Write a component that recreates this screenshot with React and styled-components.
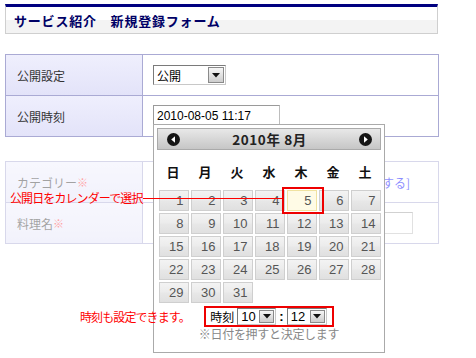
import styled, { createGlobalStyle } from "styled-components";

const GlobalStyle = createGlobalStyle`
  body {
    margin: 0;
    background: #fff;
    font-family: "Noto Sans CJK JP", "Liberation Sans", sans-serif;
  }
`;

const Page = styled.div`
  position: relative;
  width: 476px;
  height: 358px;
  overflow: hidden;
  padding: 4px 0 0 5px;
  box-sizing: border-box;
`;

const Header = styled.div`
  width: 433px;
  height: 26px;
  box-sizing: content-box;
  border-top: 3px solid #000080;
  border-left: 1px solid #cfcfcf;
  border-right: 1px solid #cfcfcf;
  border-bottom: 1px solid #cfcfcf;
  background: linear-gradient(#ffffff 0%, #ffffff 50%, #f3f3f3 50%, #f3f3f3 100%);
  display: flex;
  align-items: center;
  padding-left: 8px;
  box-sizing: border-box;
  height: 30px;
`;

const Title = styled.h1`
  margin: 0;
  font-size: 13px;
  font-weight: bold;
  letter-spacing: 0.8px;
  color: #000066;
`;

const Table = styled.div`
  width: 434px;
  box-sizing: border-box;
  margin-top: ${(p) => p.$gap}px;
  border: 1px solid #aaaad4;
  border-bottom: none;
  opacity: ${(p) => (p.$faded ? 0.45 : 1)};
`;

const Row = styled.div`
  display: grid;
  grid-template-columns: 137px 1fr;
  height: 41px;
  box-sizing: border-box;
  border-bottom: 1px solid #aaaad4;
`;

const Label = styled.div`
  display: flex;
  align-items: center;
  padding-left: 11px;
  border-right: 1px solid #aaaad4;
  background: linear-gradient(#efeffd, #e3e3f9);
  font-size: 12px;
  color: #333;
`;

const Required = styled.span`
  color: #ff3333;
  font-size: 11px;
`;

const Field = styled.div`
  display: flex;
  align-items: center;
  justify-content: ${(p) => p.$justify || "flex-start"};
  padding: 0 ${(p) => p.$right || 0}px 0 10px;
  font-size: 12px;
`;

const AddLink = styled.span`
  color: #0000ff;
  font-size: 12px;
`;

const SelectBox = styled.div`
  display: inline-flex;
  align-items: center;
  justify-content: space-between;
  box-sizing: border-box;
  width: ${(p) => p.$width}px;
  height: ${(p) => p.$height}px;
  border: 1px solid #7a7a7a;
  border-right-color: #c8c8c8;
  border-bottom-color: #c8c8c8;
  background: #fff;
  padding: 1px 1px 1px 3px;
  font-size: ${(p) => p.$font}px;
  font-family: ${(p) =>
    p.$digits ? '"Liberation Sans", sans-serif' : '"Noto Sans CJK JP", sans-serif'};
  color: #000;
`;

const SelectArrow = styled.span`
  display: flex;
  align-items: center;
  justify-content: center;
  width: ${(p) => p.$size}px;
  align-self: stretch;
  box-sizing: border-box;
  border: 1px solid #8a8a8a;
  background: linear-gradient(#f6f6f6, #cdcdcd);
`;

const TextInput = styled.div`
  box-sizing: border-box;
  width: ${(p) => (p.$width ? `${p.$width}px` : "100%")};
  height: ${(p) => p.$height}px;
  border: 1px solid #bdbdbd;
  border-left-color: #9a9a9a;
  border-top-color: #9a9a9a;
  padding: 3px 3px 0;
  font-family: "Liberation Sans", sans-serif;
  font-size: 12px;
  color: #000;
  background: #fff;
`;

const Calendar = styled.div`
  position: absolute;
  left: 153px;
  top: 124px;
  width: 232px;
  height: 229px;
  box-sizing: border-box;
  border: 1px solid #aaa;
  background: #fff;
  padding: 3px;
  display: flex;
  flex-direction: column;
  align-items: center;
`;

const CalHeader = styled.div`
  width: 224px;
  height: 22px;
  box-sizing: border-box;
  border: 1px solid #aaa;
  background: linear-gradient(#e8e8e8, #c6c6c6);
  display: flex;
  align-items: center;
  justify-content: space-between;
  padding: 0 8px 0 9px;
`;

const CalTitle = styled.span`
  font-size: 13.5px;
  font-weight: bold;
  color: #222;
  letter-spacing: 0.6px;
`;

const DayNames = styled.div`
  display: grid;
  grid-template-columns: repeat(7, 30px);
  column-gap: 2px;
  height: 40px;
  align-items: center;
  padding-top: 3px;
  box-sizing: border-box;
`;

const DayName = styled.span`
  text-align: center;
  font-size: 13px;
  font-weight: bold;
  color: #111;
`;

const DayGrid = styled.div`
  display: grid;
  grid-template-columns: repeat(7, 30px);
  grid-auto-rows: 21px;
  gap: 2px;
  margin-left: 1px;
  width: 222px;
`;

const DayCell = styled.div`
  box-sizing: border-box;
  border: 1px solid ${(p) => (p.$active ? "#f0e2a0" : "#cfcfcf")};
  background: ${(p) =>
    p.$active
      ? "#fffbe6"
      : "linear-gradient(#f3f3f3 0%, #ececec 45%, #e7e7e7 55%, #e0e0e0 100%)"};
  text-align: right;
  padding-right: 4px;
  font-family: "Liberation Sans", sans-serif;
  font-size: 13px;
  line-height: 19px;
  color: #555;
`;

const TimeRow = styled.div`
  display: flex;
  align-items: center;
  gap: 3px;
  margin-top: 3px;
  height: 21px;
  box-sizing: border-box;
  border: 2px solid #ee0000;
  padding: 0 5px 0 4px;
  font-size: 12px;
  color: #000;
`;

const Colon = styled.span`
  font-family: "Liberation Sans", sans-serif;
  font-weight: bold;
  font-size: 13px;
`;

const CalNote = styled.div`
  margin-top: 0px;
  font-size: 12px;
  line-height: 14px;
  color: #888;
  letter-spacing: -0.3px;
`;

const Callout = styled.span`
  position: absolute;
  left: ${(p) => p.$x}px;
  top: ${(p) => p.$y}px;
  font-size: 12px;
  line-height: 14px;
  letter-spacing: -0.9px;
  color: #ff0000;
  white-space: nowrap;
`;

const CalloutLine = styled.div`
  position: absolute;
  left: 143px;
  top: 198px;
  width: 140px;
  height: 1px;
  background: #ff0000;
`;

const CalloutBox = styled.div`
  position: absolute;
  left: 282px;
  top: 187px;
  width: 42px;
  height: 27px;
  box-sizing: border-box;
  border: 2px solid #ee0000;
`;

function NavButton({ dir }) {
  return (
    <svg width="13" height="13" viewBox="0 0 13 13">
      <circle cx="6.5" cy="6.5" r="6.5" fill="#151515" />
      {dir === "prev" ? (
        <polygon points="8,3.3 8,9.7 4.2,6.5" fill="#fff" />
      ) : (
        <polygon points="5,3.3 5,9.7 8.8,6.5" fill="#fff" />
      )}
    </svg>
  );
}

function Select({ value, width, height, font, arrow, digits }) {
  return (
    <SelectBox $width={width} $height={height} $font={font} $digits={digits}>
      <span>{value}</span>
      <SelectArrow $size={arrow}>
        <svg width="8" height="5" viewBox="0 0 8 5">
          <polygon points="0,0 8,0 4,4.5" fill="#111" />
        </svg>
      </SelectArrow>
    </SelectBox>
  );
}

const weekDays = ["日", "月", "火", "水", "木", "金", "土"];
const days = Array.from({ length: 31 }, (_, i) => i + 1);

export default function App() {
  return (
    <>
      <GlobalStyle />
      <Page>
        <Header>
          <Title>サービス紹介　新規登録フォーム</Title>
        </Header>

        <Table $gap={20}>
          <Row>
            <Label>公開設定</Label>
            <Field>
              <Select value="公開" width={73} height={20} font={12} arrow={16} />
            </Field>
          </Row>
          <Row>
            <Label>公開時刻</Label>
            <Field>
              <TextInput $width={127} $height={22}>2010-08-05 11:17</TextInput>
            </Field>
          </Row>
        </Table>

        <Table $gap={24} $faded>
          <Row>
            <Label>
              カテゴリー<Required>※</Required>
            </Label>
            <Field $justify="flex-end" $right={28}>
              <AddLink>[カテゴリーを追加する]</AddLink>
            </Field>
          </Row>
          <Row>
            <Label>
              料理名<Required>※</Required>
            </Label>
            <Field $right={25}>
              <TextInput $height={22} />
            </Field>
          </Row>
        </Table>

        <Calendar>
          <CalHeader>
            <NavButton dir="prev" />
            <CalTitle>2010年 8月</CalTitle>
            <NavButton dir="next" />
          </CalHeader>
          <DayNames>
            {weekDays.map((d) => (
              <DayName key={d}>{d}</DayName>
            ))}
          </DayNames>
          <DayGrid>
            {days.map((d) => (
              <DayCell key={d} $active={d === 5}>
                {d}
              </DayCell>
            ))}
          </DayGrid>
          <TimeRow>
            <span>時刻</span>
            <Select value="10" width={39} height={17} font={13} arrow={15} digits />
            <Colon>:</Colon>
            <Select value="12" width={40} height={17} font={13} arrow={15} digits />
          </TimeRow>
          <CalNote>※日付を押すと決定します</CalNote>
        </Calendar>

        <CalloutLine />
        <CalloutBox />
        <Callout $x={10} $y={191}>公開日をカレンダーで選択</Callout>
        <Callout $x={80} $y={310}>時刻も設定できます。</Callout>
      </Page>
    </>
  );
}
